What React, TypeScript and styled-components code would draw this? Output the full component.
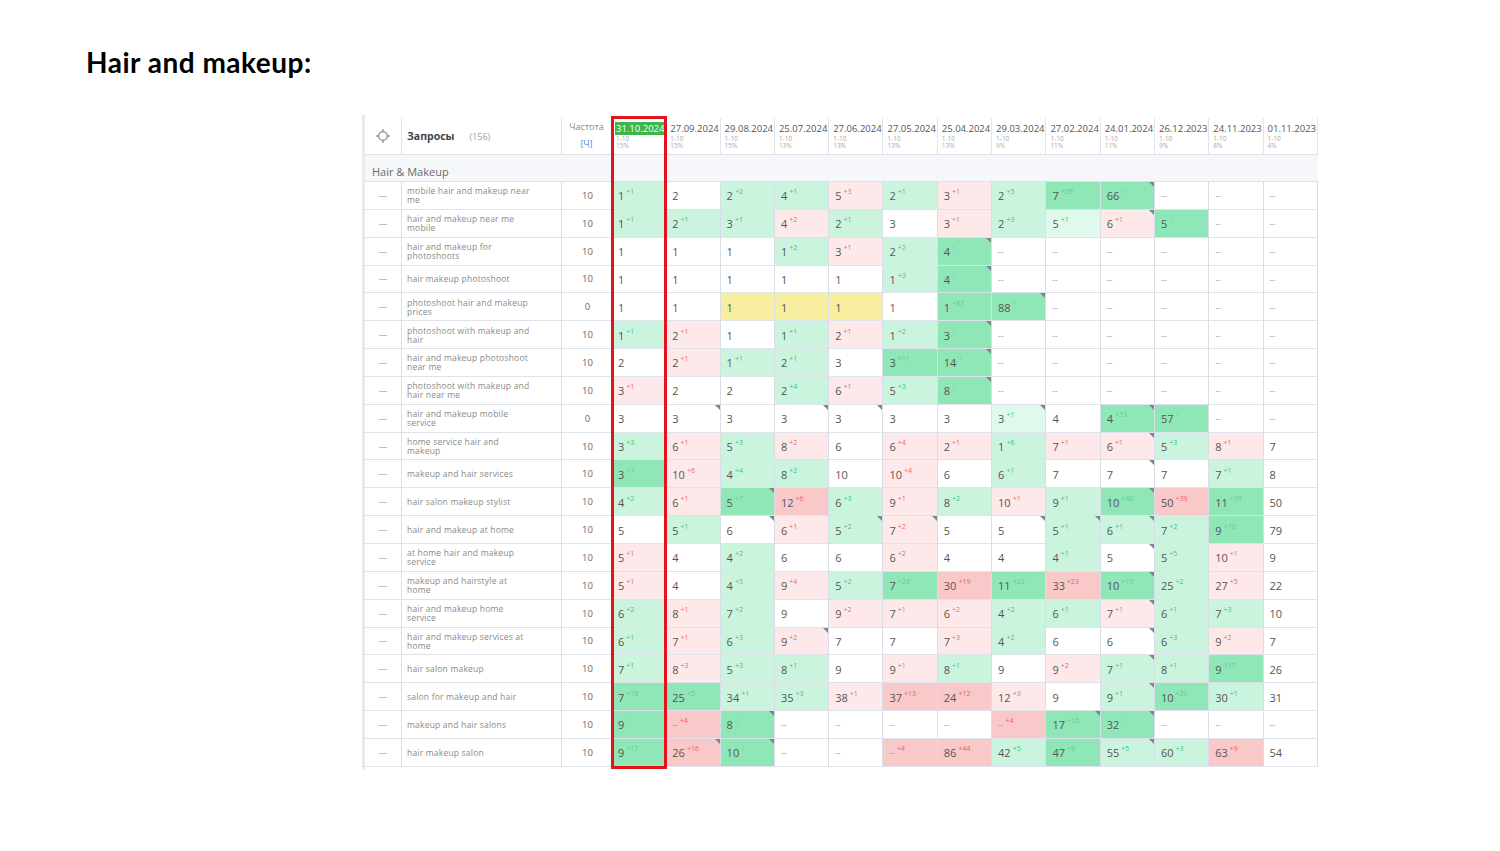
import React from 'react';
import styled, { createGlobalStyle, css } from 'styled-components';

const Global = createGlobalStyle`
  html, body { margin: 0; padding: 0; background: #fff; }
  body { font-family: "Open Sans", "Liberation Sans", sans-serif; }
`;

const COLS = '37px 160px 50px repeat(13, 54.3px)';

const TONES: Record<string, string> = {
  w: '#ffffff',
  l: '#dff9ec',
  g: '#cbf4de',
  G: '#8fe6b7',
  p: '#fde9e9',
  P: '#f9c8c8',
  y: '#f7ee9f',
};

const SUP_TONES: Record<string, string> = {
  l: '#45c184',
  g: '#45c184',
  G: '#5ccf93',
  p: '#e46c6c',
  P: '#e86464',
};

const Slide = styled.div`
  width: 1500px;
  height: 851px;
  box-sizing: border-box;
  padding: 49px 0 0 86px;
  overflow: hidden;
  background: #fff;
`;

const Title = styled.h1`
  margin: 0;
  font-family: Lato, "Liberation Sans", sans-serif;
  font-weight: 700;
  font-size: 28px;
  line-height: 27px;
  letter-spacing: 0.5px;
  color: #000;
`;

const Frame = styled.div`
  position: relative;
  margin: 39px 0 0 276px;
  width: 953px;
  border-left: 3px solid #e8eaef;
  padding: 3px 0 3px 0;
  overflow: hidden;
  background: #fff;
`;

const Row = styled.div<{ $h: number }>`
  display: grid;
  grid-template-columns: ${COLS};
  height: ${(p) => p.$h}px;
`;

const HeadCell = styled.div`
  box-sizing: border-box;
  border-right: 1px solid #e1e4eb;
  border-bottom: 1px solid #dde0e8;
  overflow: hidden;
  white-space: nowrap;
`;

const IconHead = styled(HeadCell)`
  display: flex;
  align-items: center;
  justify-content: center;
`;

const QueryHead = styled(HeadCell)`
  display: flex;
  align-items: center;
  padding-left: 5px;
`;

const QueryTitle = styled.span`
  font-size: 10.5px;
  font-weight: 700;
  color: #3f4348;
`;

const QueryCount = styled.span`
  margin-left: 15px;
  font-size: 9px;
  color: #a0a0a0;
`;

const FreqHead = styled(HeadCell)`
  display: flex;
  flex-direction: column;
  align-items: center;
  padding-top: 3px;
  font-size: 9px;
  line-height: 12px;
  color: #8a8a8a;
`;

const FreqLink = styled.span`
  margin-top: 5px;
  color: #4a8fd8;
`;

const DateHead = styled(HeadCell)`
  display: flex;
  flex-direction: column;
  padding: 4px 0 0 4px;
`;

const DateLabel = styled.span<{ $active?: boolean }>`
  font-size: 9.5px;
  line-height: 13px;
  color: #555;
  ${(p) =>
    p.$active &&
    css`
      background: #3cb54a;
      color: #fff;
      margin-left: -1px;
      padding-left: 1px;
    `}
`;

const DateSub = styled.span`
  font-size: 6.5px;
  line-height: 7px;
  color: #a9a9a9;
  &:first-of-type {
    margin-top: 3px;
  }
`;

const GroupRow = styled.div`
  box-sizing: border-box;
  height: 27px;
  display: flex;
  align-items: center;
  padding: 7px 0 0 7px;
  background: #f6f7fa;
  border-bottom: 1px solid #dde0e8;
  font-size: 11px;
  color: #6c6c6c;
`;

const BodyCell = styled.div`
  position: relative;
  box-sizing: border-box;
  border-right: 1px solid #d9dde6;
  border-bottom: 1px solid #dfe2ea;
  display: flex;
  align-items: center;
  overflow: hidden;
`;

const DashCell = styled(BodyCell)`
  justify-content: center;
  font-size: 9px;
  color: #8c8c8c;
`;

const QueryCell = styled(BodyCell)`
  padding-left: 5px;
  font-size: 8.5px;
  line-height: 9px;
  letter-spacing: 0.2px;
  color: #8a8a8a;
  white-space: pre-line;
`;

const FreqCell = styled(BodyCell)`
  justify-content: center;
  padding-left: 2px;
  font-size: 9.5px;
  color: #6a6a6a;
`;

const ValueCell = styled(BodyCell)<{ $tone: string; $corner: boolean }>`
  padding: 1px 0 0 6px;
  background: ${(p) => TONES[p.$tone] || TONES.w};
  color: #555;
  white-space: nowrap;
  ${(p) =>
    p.$corner &&
    css`
      &::after {
        content: '';
        position: absolute;
        top: 0;
        right: 0;
        border-left: 5px solid transparent;
        border-top: 5px solid #7b8394;
      }
    `}
`;

const Value = styled.span<{ $empty: boolean }>`
  color: ${(p) => (p.$empty ? '#9c9c9c' : '#555')};
  font-size: ${(p) => (p.$empty ? '8.5px' : '11px')};
`;

const Delta = styled.span<{ $tone: string }>`
  margin-left: 2px;
  font-size: 7px;
  line-height: 1;
  position: relative;
  top: -4px;
  color: ${(p) => SUP_TONES[p.$tone] || '#999'};
`;

const RedBox = styled.div`
  position: absolute;
  left: 246px;
  top: 1px;
  width: 56px;
  height: 653px;
  box-sizing: border-box;
  border: 3px solid #e3121b;
  pointer-events: none;
`;

const dates: [string, string][] = [
  ['31.10.2024', '15%'],
  ['27.09.2024', '15%'],
  ['29.08.2024', '15%'],
  ['25.07.2024', '13%'],
  ['27.06.2024', '13%'],
  ['27.05.2024', '13%'],
  ['25.04.2024', '13%'],
  ['29.03.2024', '9%'],
  ['27.02.2024', '11%'],
  ['24.01.2024', '11%'],
  ['26.12.2023', '9%'],
  ['24.11.2023', '8%'],
  ['01.11.2023', '4%'],
];

const rows: [string, string, string][] = [
  ['mobile hair and makeup near\nme', '10', '1/+1/g 2 2/+2/g 4/+1/g 5/+3/p 2/+1/g 3/+1/p 2/+5/g 7/+59/G 66/↑/G/c -- -- --'],
  ['hair and makeup near me\nmobile', '10', '1/+1/g 2/+1/g 3/+1/g 4/+2/p 2/+1/g 3 3/+1/p 2/+3/g 5/+1/l 6/+1/p/c 5/↑/G -- --'],
  ['hair and makeup for\nphotoshoots', '10', '1 1 1 1/+2/g 3/+1/p 2/+2/g 4/↑/G/c -- -- -- -- -- --'],
  ['hair makeup photoshoot', '10', '1 1 1 1 1 1/+3/g 4/↑/G/c -- -- -- -- -- --'],
  ['photoshoot hair and makeup\nprices', '0', '1 1 1//y 1//y 1//y 1 1/+87/G 88/↑/G/c -- -- -- -- --'],
  ['photoshoot with makeup and\nhair', '10', '1/+1/g 2/+1/p 1 1/+1/g 2/+1/p 1/+2/g 3/↑/G/c -- -- -- -- -- --'],
  ['hair and makeup photoshoot\nnear me', '10', '2 2/+1/p 1/+1/g 2/+1/g 3 3/+11/G 14/↑/G/c -- -- -- -- -- --'],
  ['photoshoot with makeup and\nhair near me', '10', '3/+1/p 2 2 2/+4/g 6/+1/p 5/+3/g 8/↑/G/c -- -- -- -- -- --'],
  ['hair and makeup mobile\nservice', '0', '3 3///c 3 3///c 3///c 3 3 3/+1/l/c 4 4/+53/G/c 57/↑/G -- --'],
  ['home service hair and\nmakeup', '10', '3/+3/g 6/+1/p 5/+3/g 8/+2/p 6 6/+4/p 2/+1/p 1/+6/g 7/+1/p 6/+1/p/c 5/+3/g 8/+1/p 7'],
  ['makeup and hair services', '10', '3/+7/G 10/+6/p 4/+4/g 8/+2/g 10 10/+4/p 6 6/+1/g 7 7///c 7 7/+1/g 8'],
  ['hair salon makeup stylist', '10', '4/+2/g 6/+1/p 5/+7/G/c 12/+6/P 6/+3/g 9/+1/p 8/+2/g 10/+1/p 9/+1/g 10/+40/G/c 50/+39/P 11/+39/G 50'],
  ['hair and makeup at home', '10', '5 5/+1/g 6///c 6/+1/p 5/+2/g/c 7/+2/p/c 5 5///c 5/+1/g/c 6/+1/g/c 7/+2/g 9/+70/G 79'],
  ['at home hair and makeup\nservice', '10', '5/+1/p 4 4/+2/g 6 6 6/+2/p 4 4 4/+1/g 5///c 5/+5/g 10/+1/p 9'],
  ['makeup and hairstyle at\nhome', '10', '5/+1/p 4 4/+5/g 9/+4/p 5/+2/g 7/+23/G 30/+19/P 11/+22/G 33/+23/P 10/+15/G/c 25/+2/g 27/+5/p 22'],
  ['hair and makeup home\nservice', '10', '6/+2/g 8/+1/p 7/+2/g 9 9/+2/p 7/+1/p 6/+2/p 4/+2/g 6/+1/g 7/+1/p/c 6/+1/g 7/+3/g 10'],
  ['hair and makeup services at\nhome', '10', '6/+1/g 7/+1/p 6/+3/g 9/+2/p/c 7 7 7/+3/p 4/+2/g 6 6///c 6/+3/g 9/+2/p 7'],
  ['hair salon makeup', '10', '7/+1/g 8/+3/p 5/+3/g 8/+1/g 9 9/+1/p 8/+1/g 9 9/+2/p 7/+1/g/c 8/+1/g 9/+17/G 26'],
  ['salon for makeup and hair', '10', '7/+18/G 25/+5/G 34/+1/g 35/+3/g 38/+1/p 37/+13/P 24/+12/P 12/+3/p 9 9/+1/g/c 10/+20/G 30/+1/g 31'],
  ['makeup and hair salons', '10', '9/↑/G --/+4/P 8/↑/G/c -- -- -- -- --/+4/P 17/+15/G/c 32/↑/G/c -- -- --'],
  ['hair makeup salon', '10', '9/+17/G 26/+16/P/c 10/↑/G/c -- -- --/+4/P 86/+44/P 42/+5/g 47/+8/G 55/+5/g/c 60/+3/g 63/+9/P 54'],
];

const Crosshair = () => (
  <svg width="14" height="14" viewBox="0 0 14 14" fill="none" stroke="#8a90a0" strokeWidth="1.3">
    <circle cx="7" cy="7" r="4.3" />
    <line x1="7" y1="0" x2="7" y2="3.2" />
    <line x1="7" y1="10.8" x2="7" y2="14" />
    <line x1="0" y1="7" x2="3.2" y2="7" />
    <line x1="10.8" y1="7" x2="14" y2="7" />
  </svg>
);

const DataCell = ({ spec }: { spec: string }) => {
  const [value, delta = '', tone = 'w', flag = ''] = spec.split('/');
  const t = tone || 'w';
  return (
    <ValueCell $tone={t} $corner={flag === 'c'}>
      <Value $empty={value === '--'}>{value}</Value>
      {delta && <Delta $tone={t}>{delta}</Delta>}
    </ValueCell>
  );
};

export default function App() {
  return (
    <>
      <Global />
      <Slide>
        <Title>Hair and makeup:</Title>
        <Frame>
          <Row $h={37}>
            <IconHead>
              <Crosshair />
            </IconHead>
            <QueryHead>
              <QueryTitle>Запросы</QueryTitle>
              <QueryCount>(156)</QueryCount>
            </QueryHead>
            <FreqHead>
              <span>Частота</span>
              <FreqLink>[Ч]</FreqLink>
            </FreqHead>
            {dates.map(([d, pct], i) => (
              <DateHead key={d}>
                <DateLabel $active={i === 0}>{d}</DateLabel>
                <DateSub>1-10</DateSub>
                <DateSub>{pct}</DateSub>
              </DateHead>
            ))}
          </Row>
          <GroupRow>Hair &amp; Makeup</GroupRow>
          {rows.map(([q, f, cells]) => (
            <Row $h={27.85} key={q}>
              <DashCell>—</DashCell>
              <QueryCell>{q}</QueryCell>
              <FreqCell>{f}</FreqCell>
              {cells.split(' ').map((c, i) => (
                <DataCell key={i} spec={c} />
              ))}
            </Row>
          ))}
          <RedBox />
        </Frame>
      </Slide>
    </>
  );
}
